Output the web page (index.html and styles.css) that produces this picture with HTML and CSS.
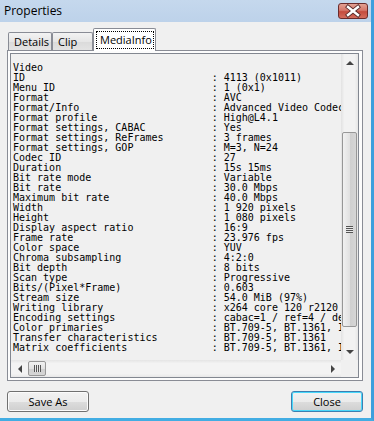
FILE: index.html
```html
<!DOCTYPE html>
<html>
<head>
<meta charset="utf-8">
<link rel="stylesheet" href="styles.css">
</head>
<body>
<div class="window">
  <div class="titlebar">
    <span class="title">Properties</span>
    <div class="close-btn">
      <svg width="28" height="14" viewBox="0 0 28 14">
        <path d="M9 3 L19 11 M19 3 L9 11" stroke="#5a2a2a" stroke-width="4.2" stroke-linecap="square" fill="none"/>
        <path d="M9 3 L19 11 M19 3 L9 11" stroke="#ffffff" stroke-width="2.4" stroke-linecap="square" fill="none"/>
      </svg>
    </div>
  </div>
  <div class="tabs">
    <div class="tab tab-details">Details</div>
    <div class="tab tab-clip">Clip</div>
    <div class="tab tab-active"><span class="focus">MediaInfo</span></div>
  </div>
  <div class="panel">
    <div class="textbox">
<pre class="content">Video
ID                               : 4113 (0x1011)
Menu ID                          : 1 (0x1)
Format                           : AVC
Format/Info                      : Advanced Video Codec
Format profile                   : High@L4.1
Format settings, CABAC           : Yes
Format settings, ReFrames        : 3 frames
Format settings, GOP             : M=3, N=24
Codec ID                         : 27
Duration                         : 15s 15ms
Bit rate mode                    : Variable
Bit rate                         : 30.0 Mbps
Maximum bit rate                 : 40.0 Mbps
Width                            : 1 920 pixels
Height                           : 1 080 pixels
Display aspect ratio             : 16:9
Frame rate                       : 23.976 fps
Color space                      : YUV
Chroma subsampling               : 4:2:0
Bit depth                        : 8 bits
Scan type                        : Progressive
Bits/(Pixel*Frame)               : 0.603
Stream size                      : 54.0 MiB (97%)
Writing library                  : x264 core 120 r2120 0c7dab9
Encoding settings                : cabac=1 / ref=4 / deblock=1:0:0
Color primaries                  : BT.709-5, BT.1361, IEC 61966-2-4
Transfer characteristics         : BT.709-5, BT.1361
Matrix coefficients              : BT.709-5, BT.1361, IEC 61966-2-4 709</pre>
      <div class="vscroll">
        <div class="arrow-box"><span class="tri tri-up"></span></div>
        <div class="vtrack">
          <div class="vthumb"><span class="grip-h"></span></div>
        </div>
        <div class="arrow-box"><span class="tri tri-down"></span></div>
      </div>
      <div class="hscroll">
        <div class="arrow-box-h"><span class="tri tri-left"></span></div>
        <div class="hthumb"><span class="grip-v"></span></div>
        <div class="htrack"></div>
        <div class="arrow-box-h"><span class="tri tri-right"></span></div>
      </div>
      <div class="corner"></div>
    </div>
  </div>
  <div class="buttons">
    <button class="btn btn-save">Save As</button>
    <button class="btn btn-close">Close</button>
  </div>
</div>
</body>
</html>
```
FILE: styles.css
```css
html, body {
  margin: 0;
  padding: 0;
  background: #f0f0f0;
}
.window {
  width: 374px;
  height: 421px;
  box-sizing: border-box;
  border-right: 3px solid #3f9fdd;
  border-bottom: 3px solid #42ade3;
  background: #f0f0f0;
  display: flex;
  flex-direction: column;
  font-family: "Open Sans", "Noto Sans", sans-serif;
  font-size: 11px;
  color: #000;
  overflow: hidden;
}
.titlebar {
  height: 22px;
  flex: none;
  display: flex;
  justify-content: space-between;
  align-items: flex-start;
  background: linear-gradient(#c5d8ed, #bdd2ea);
}
.title {
  padding-left: 4px;
  line-height: 22px;
  font-size: 12px;
}
.close-btn {
  margin-top: 3px;
  margin-right: 3px;
  width: 30px;
  height: 16px;
  box-sizing: border-box;
  border: 1px solid #6b2b2b;
  border-radius: 3px;
  background: linear-gradient(#e3a194 0%, #d5776b 45%, #c44b3e 55%, #d46d5e 100%);
  display: flex;
  align-items: center;
  justify-content: center;
}
.close-btn svg {
  display: block;
}
.tabs {
  flex: none;
  margin-top: 6px;
  padding-left: 8px;
  height: 22px;
  display: flex;
  align-items: flex-end;
  position: relative;
  z-index: 1;
}
.tab {
  box-sizing: border-box;
  height: 18px;
  border: 1px solid #898c95;
  border-bottom: none;
  border-radius: 2px 2px 0 0;
  background: linear-gradient(#f3f3f3, #e6e6e6 50%, #dadada 51%, #e3e3e3);
  line-height: 17px;
  padding-left: 5px;
}
.tab-details {
  width: 44px;
}
.tab-clip {
  width: 41px;
}
.tab-active {
  width: 63px;
  height: 23px;
  margin-bottom: -1px;
  background: #ffffff;
  padding: 2px 0 0 2px;
}
.focus {
  display: block;
  box-sizing: border-box;
  width: 58px;
  height: 18px;
  border: 1px dotted #000;
  line-height: 15px;
  padding-left: 3px;
}
.panel {
  flex: none;
  margin-left: 7px;
  width: 356px;
  height: 331px;
  box-sizing: border-box;
  border: 1px solid #898c95;
  background: #fcfcfc;
  padding: 2px 3px 2px 2px;
}
.textbox {
  width: 100%;
  height: 100%;
  box-sizing: border-box;
  border: 1px solid #828790;
  background: #f0f0f0;
  display: grid;
  grid-template-columns: 1fr 17px;
  grid-template-rows: 1fr 17px;
}
.content {
  margin: 0;
  padding: 9px 0 0 2px;
  font-family: "DejaVu Sans Mono", "Liberation Mono", monospace;
  font-size: 10px;
  line-height: 10px;
  white-space: pre;
  overflow: hidden;
  color: #000;
}
.vscroll {
  display: flex;
  flex-direction: column;
  background: linear-gradient(90deg, #e2e2e2, #f2f2f2 20%, #f2f2f2 80%, #e6e6e6);
}
.arrow-box {
  height: 17px;
  flex: none;
  display: flex;
  align-items: center;
  justify-content: center;
}
.vtrack {
  flex: 1;
  position: relative;
}
.vthumb {
  position: absolute;
  left: 1px;
  right: 1px;
  top: 61px;
  height: 195px;
  box-sizing: border-box;
  border: 1px solid #979797;
  border-radius: 2px;
  background: linear-gradient(90deg, #f1f1f1, #e2e2e2 50%, #cfcfcf 55%, #d6d6d6);
  display: flex;
  align-items: center;
  justify-content: center;
}
.grip-h {
  width: 7px;
  height: 7px;
  background: repeating-linear-gradient(#555 0 1px, #e8e8e8 1px 2px);
}
.hscroll {
  display: flex;
  align-items: stretch;
  background: linear-gradient(#e4e4e4, #f3f3f3 20%, #f3f3f3 80%, #e8e8e8);
}
.arrow-box-h {
  width: 17px;
  flex: none;
  display: flex;
  align-items: center;
  justify-content: center;
}
.hthumb {
  width: 18px;
  margin: 1px 0;
  flex: none;
  box-sizing: border-box;
  border: 1px solid #979797;
  border-radius: 2px;
  background: linear-gradient(#f1f1f1, #e2e2e2 50%, #cfcfcf 55%, #d6d6d6);
  display: flex;
  align-items: center;
  justify-content: center;
}
.grip-v {
  width: 7px;
  height: 7px;
  background: repeating-linear-gradient(90deg, #555 0 1px, #e8e8e8 1px 2px);
}
.htrack {
  flex: 1;
}
.corner {
  background: #f0f0f0;
}
.tri {
  width: 0;
  height: 0;
  display: block;
}
.tri-up {
  border-left: 4px solid transparent;
  border-right: 4px solid transparent;
  border-bottom: 4px solid #444;
}
.tri-down {
  border-left: 4px solid transparent;
  border-right: 4px solid transparent;
  border-top: 4px solid #444;
}
.tri-left {
  border-top: 4px solid transparent;
  border-bottom: 4px solid transparent;
  border-right: 4px solid #444;
}
.tri-right {
  border-top: 4px solid transparent;
  border-bottom: 4px solid transparent;
  border-left: 4px solid #444;
}
.buttons {
  flex: none;
  margin-top: 10px;
  padding: 0 8px 0 7px;
  display: flex;
  justify-content: space-between;
}
.btn {
  height: 21px;
  box-sizing: border-box;
  border: 1px solid #707070;
  border-radius: 3px;
  background: linear-gradient(#f2f2f2, #ebebeb 50%, #dddddd 51%, #cfcfcf);
  box-shadow: inset 0 0 0 1px #fbfbfb;
  font-family: "Open Sans", "Noto Sans", sans-serif;
  font-size: 11px;
  color: #000;
  padding: 0;
  margin: 0;
}
.btn-save {
  width: 82px;
}
.btn-close {
  width: 72px;
  border-color: #3c7fb1;
  box-shadow: inset 0 0 0 1px #48d8fb;
}
```
